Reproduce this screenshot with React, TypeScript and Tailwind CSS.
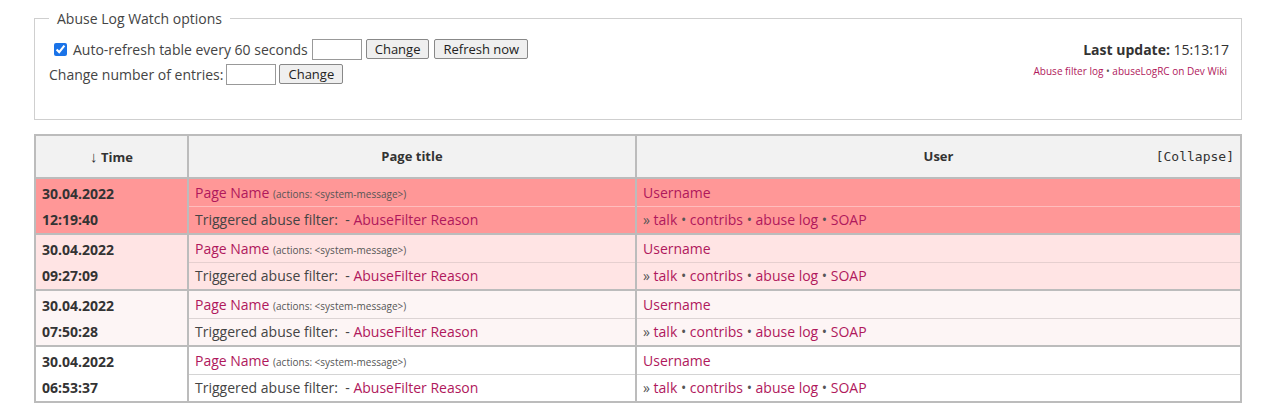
import * as React from 'react';

type Entry = {
  date: string;
  time: string;
  bg: string;
  inner: string;
};

const entries: Entry[] = [
  { date: '30.04.2022', time: '12:19:40', bg: 'bg-[#ff9797]', inner: 'border-[#ffbdbd]' },
  { date: '30.04.2022', time: '09:27:09', bg: 'bg-[#ffe4e4]', inner: 'border-[#e6cfcf]' },
  { date: '30.04.2022', time: '07:50:28', bg: 'bg-[#fdf5f5]', inner: 'border-[#dcd4d4]' },
  { date: '30.04.2022', time: '06:53:37', bg: 'bg-white', inner: 'border-[#d4d4d4]' },
];

const link = 'text-[#b0185c]';

function Dot() {
  return <span className="text-[#555]"> • </span>;
}

function Options() {
  return (
    <fieldset className="mx-[34px] border border-[#cfcfcf] px-[14px] pb-[33px] pt-[8px] min-w-0">
      <legend className="px-[8px] text-[14px] text-[#444]">Abuse Log Watch options</legend>
      <div className="flex justify-between">
        <div className="text-[14px] text-[#444]">
          <div className="flex items-center h-[24px] ml-[5px]">
            <input type="checkbox" defaultChecked className="w-[13px] h-[13px] accent-[#1a73e8] mr-[6px]" />
            <span>Auto-refresh table every 60 seconds</span>
            <input className="ml-[4px] w-[50px] h-[21px] border border-[#999] bg-white" />
            <button className="ml-[4px] h-[20px] px-[8px] border border-[#888] rounded-[2px] bg-[#efefef] text-[13px] text-[#222]">Change</button>
            <button className="ml-[5px] h-[20px] px-[8px] border border-[#888] rounded-[2px] bg-[#efefef] text-[13px] text-[#222]">Refresh now</button>
          </div>
          <div className="flex items-center h-[24px] mt-[1px]">
            <span>Change number of entries:</span>
            <input className="ml-[3px] w-[50px] h-[21px] border border-[#999] bg-white" />
            <button className="ml-[3px] h-[20px] px-[8px] border border-[#888] rounded-[2px] bg-[#efefef] text-[13px] text-[#222]">Change</button>
          </div>
        </div>
        <div className="flex flex-col items-end">
          <div className="text-[14px] text-[#333] h-[24px] flex items-center mr-[-2px]">
            <span className="font-bold">Last update:</span>&nbsp;15:13:17
          </div>
          <div className="text-[10px] mt-[3px]">
            <span className={link}>Abuse filter log</span>
            <span className="text-[#555]"> • </span>
            <span className={link}>abuseLogRC on Dev Wiki</span>
          </div>
        </div>
      </div>
    </fieldset>
  );
}

function Table() {
  const cell = 'border-x-2 border-[#bcbcbc] px-[6px]';
  return (
    <div className="mx-[34px] mt-[14px]">
      <table className="w-full border-collapse border-2 border-[#bcbcbc] text-[14px] text-[#444] table-fixed">
        <colgroup>
          <col className="w-[153px]" />
          <col className="w-[448px]" />
          <col />
        </colgroup>
        <thead>
          <tr className="h-[43px] bg-[#f2f2f2]">
            <th className="border-2 border-[#bcbcbc] text-[13px] font-bold text-[#333]">
              <span className="text-[15px] font-normal">↓</span> Time
            </th>
            <th className="border-2 border-[#bcbcbc] text-[13px] font-bold text-[#333]">Page title</th>
            <th className="border-2 border-[#bcbcbc] text-[13px] font-bold text-[#333] relative">
              User
              <span className="absolute right-[6px] top-1/2 -translate-y-1/2 font-normal text-[13px] text-[#333] font-['DejaVu_Sans_Mono',monospace]">
                [Collapse]
              </span>
            </th>
          </tr>
        </thead>
        <tbody>
          {entries.map((e, i) => (
            <React.Fragment key={i}>
              <tr className={`h-[28px] ${e.bg}`}>
                <td rowSpan={2} className="border-2 border-[#bcbcbc] px-[6px] align-middle font-bold text-[#333]">
                  <div className="h-[26px] flex items-center">{e.date}</div>
                  <div className="h-[26px] flex items-center">{e.time}</div>
                </td>
                <td className={`${cell} border-t-2 border-b ${e.inner} border-x-[#bcbcbc] border-t-[#bcbcbc]`}>
                  <span className={link}>Page Name</span>{' '}
                  <span className="text-[10px] text-[#555]">(actions: &lt;system-message&gt;)</span>
                </td>
                <td className={`${cell} border-t-2 border-b ${e.inner} border-x-[#bcbcbc] border-t-[#bcbcbc]`}>
                  <span className={link}>Username</span>
                </td>
              </tr>
              <tr className={`h-[28px] ${e.bg}`}>
                <td className={`${cell} border-b-2 border-t ${e.inner} border-x-[#bcbcbc] border-b-[#bcbcbc]`}>
                  Triggered abuse filter:&nbsp; - <span className={link}>AbuseFilter Reason</span>
                </td>
                <td className={`${cell} border-b-2 border-t ${e.inner} border-x-[#bcbcbc] border-b-[#bcbcbc]`}>
                  <span className="text-[#555]">» </span>
                  <span className={link}>talk</span>
                  <Dot />
                  <span className={link}>contribs</span>
                  <Dot />
                  <span className={link}>abuse log</span>
                  <Dot />
                  <span className={link}>SOAP</span>
                </td>
              </tr>
            </React.Fragment>
          ))}
        </tbody>
      </table>
    </div>
  );
}

export default function App() {
  return (
    <div className="bg-white w-[1276px] h-[415px] pt-[8px] font-['Open_Sans',sans-serif]">
      <Options />
      <Table />
    </div>
  );
}
